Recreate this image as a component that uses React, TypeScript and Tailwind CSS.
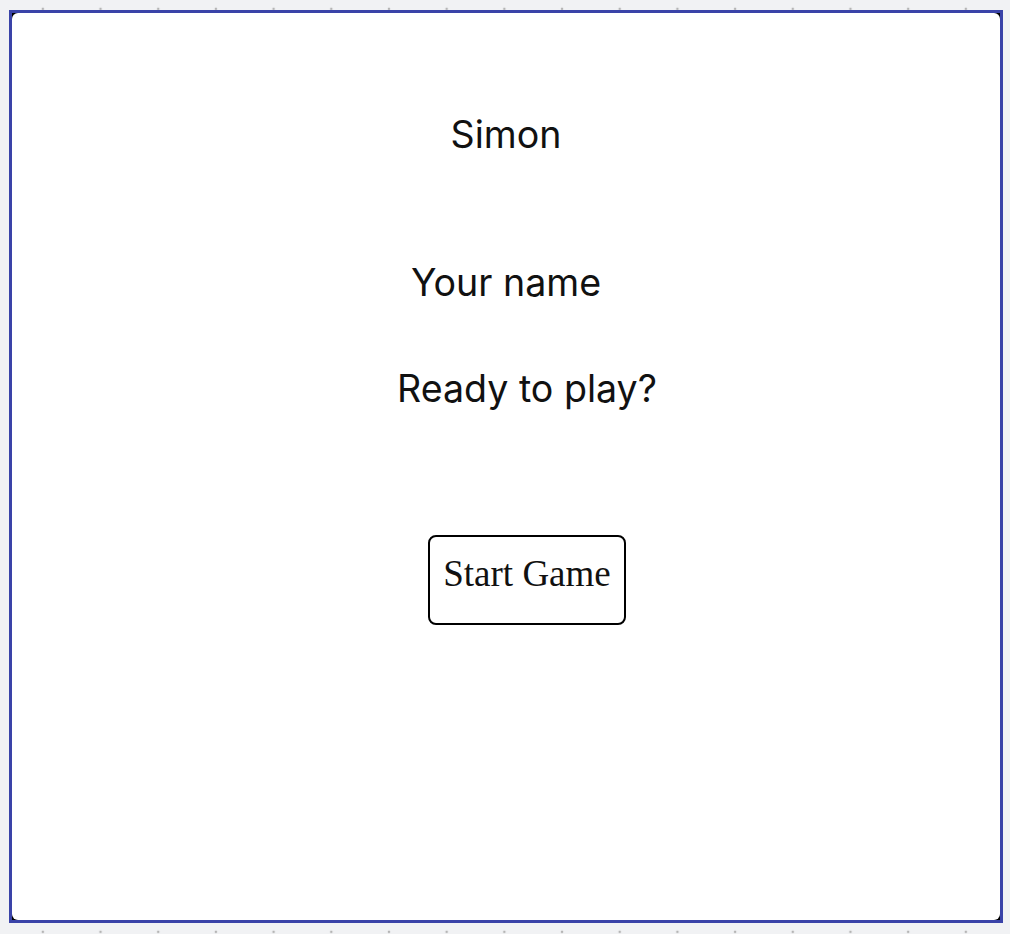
export default function App() {
  return (
    <div className="min-h-screen w-full bg-[#f1f2f4] bg-[radial-gradient(circle,#b4b4b4_1.4px,transparent_1.6px)] bg-[size:57.7px_57.7px] bg-[position:14px_-20px] pt-[10px] pl-[9px]">
      <div className="w-[994px] h-[913px] border-[3px] border-[#3a43a8] bg-black">
        <div className="h-full w-full bg-white rounded-[6px] flex flex-col items-center text-[#111] font-['Inter','Noto_Sans',sans-serif] text-[37.6px]">
          <h1 className="mt-[100px] leading-[44px] font-normal">Simon</h1>
          <p className="mt-[104px] leading-[44px]">Your name</p>
          <div className="ml-[42px] flex flex-col items-center">
            <p className="mt-[62px] leading-[44px]">Ready to play?</p>
            <button className="mt-[124px] h-[90px] border-2 border-black rounded-[8px] px-[13px] pt-[16px] pb-[28px] bg-white font-['Liberation_Serif','Times_New_Roman',serif] text-[37px] leading-[42px] text-[#111]">
              Start Game
            </button>
          </div>
        </div>
      </div>
    </div>
  );
}
